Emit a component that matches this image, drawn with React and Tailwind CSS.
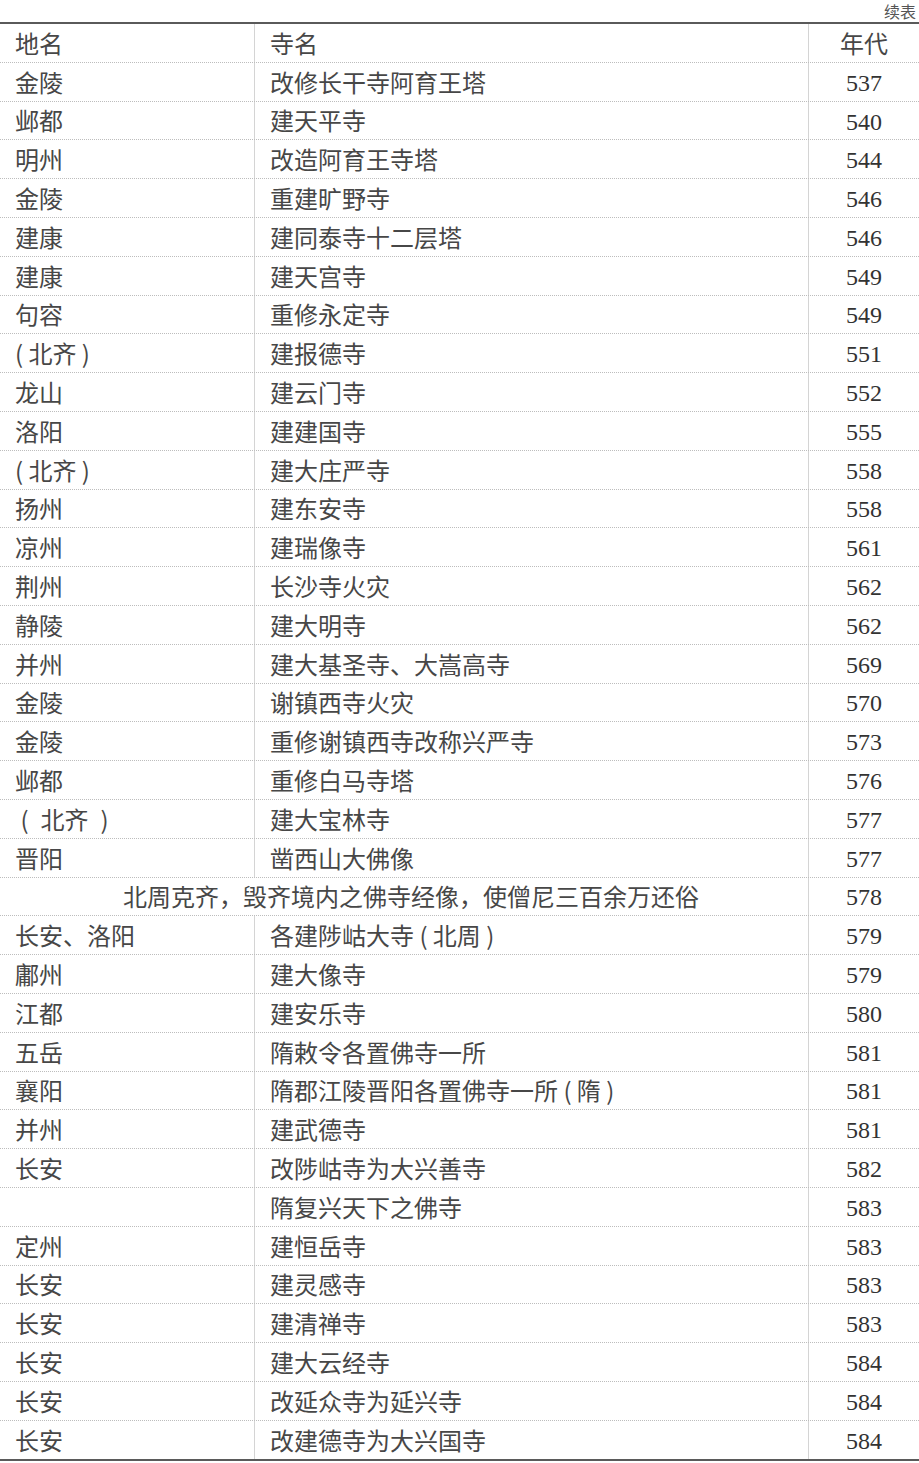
import React from "react";

const ROWS = [
  ["金陵", "改修长干寺阿育王塔", "537"],
  ["邺都", "建天平寺", "540"],
  ["明州", "改造阿育王寺塔", "544"],
  ["金陵", "重建旷野寺", "546"],
  ["建康", "建同泰寺十二层塔", "546"],
  ["建康", "建天宫寺", "549"],
  ["句容", "重修永定寺", "549"],
  ["( 北齐 )", "建报德寺", "551"],
  ["龙山", "建云门寺", "552"],
  ["洛阳", "建建国寺", "555"],
  ["( 北齐 )", "建大庄严寺", "558"],
  ["扬州", "建东安寺", "558"],
  ["凉州", "建瑞像寺", "561"],
  ["荆州", "长沙寺火灾", "562"],
  ["静陵", "建大明寺", "562"],
  ["并州", "建大基圣寺、大嵩高寺", "569"],
  ["金陵", "谢镇西寺火灾", "570"],
  ["金陵", "重修谢镇西寺改称兴严寺", "573"],
  ["邺都", "重修白马寺塔", "576"],
  ["\u00a0(\u2002北齐\u2002)", "建大宝林寺", "577"],
  ["晋阳", "凿西山大佛像", "577"],
  [null, "北周克齐，毁齐境内之佛寺经像，使僧尼三百余万还俗", "578"],
  ["长安、洛阳", "各建陟岵大寺 ( 北周 )", "579"],
  ["鄘州", "建大像寺", "579"],
  ["江都", "建安乐寺", "580"],
  ["五岳", "隋敕令各置佛寺一所", "581"],
  ["襄阳", "隋郡江陵晋阳各置佛寺一所 ( 隋 )", "581"],
  ["并州", "建武德寺", "581"],
  ["长安", "改陟岵寺为大兴善寺", "582"],
  ["", "隋复兴天下之佛寺", "583"],
  ["定州", "建恒岳寺", "583"],
  ["长安", "建灵感寺", "583"],
  ["长安", "建清禅寺", "583"],
  ["长安", "建大云经寺", "584"],
  ["长安", "改延众寺为延兴寺", "584"],
  ["长安", "改建德寺为大兴国寺", "584"],
];

const cjk = "font-['Noto_Sans_CJK_SC',sans-serif]";
const num = "font-['Liberation_Serif','Noto_Sans_CJK_SC',serif]";

function Row({ place, name, year, last }) {
  const line = last ? "" : "border-b border-dotted border-[#bdbdbd]";
  return (
    <div className={`flex h-[38.8px] items-center ${line}`}>
      {place === null ? (
        <div className="flex h-full w-[809px] items-center justify-center border-r border-[#d4d4d4] pl-[14px]">
          {name}
        </div>
      ) : (
        <>
          <div className="flex h-full w-[255px] items-center border-r border-[#d4d4d4] pl-[15px]">{place}</div>
          <div className="flex h-full w-[554px] items-center border-r border-[#d4d4d4] pl-[15px]">{name}</div>
        </>
      )}
      <div className={`flex h-full flex-1 items-center justify-center pt-[2px] text-[24px] text-[#333] ${num}`}>{year}</div>
    </div>
  );
}

export default function App() {
  return (
    <div className={`w-[919px] h-[1463px] bg-white text-[#474747] text-[24px] ${cjk}`}>
      <div className="flex h-[22px] items-start justify-end pt-[1px] pr-[3px] text-[16px] leading-[20px] text-[#555]">续表</div>
      <div className="border-t-2 border-b-2 border-[#5a5a5a]">
        <div className="flex h-[38.8px] items-center border-b border-dotted border-[#bdbdbd]">
          <div className="flex h-full w-[255px] items-center border-r border-[#d4d4d4] pl-[15px]">地名</div>
          <div className="flex h-full w-[554px] items-center border-r border-[#d4d4d4] pl-[15px]">寺名</div>
          <div className="flex h-full flex-1 items-center justify-center">年代</div>
        </div>
        {ROWS.map((r, i) => (
          <Row key={i} place={r[0]} name={r[1]} year={r[2]} last={i === ROWS.length - 1} />
        ))}
      </div>
    </div>
  );
}
